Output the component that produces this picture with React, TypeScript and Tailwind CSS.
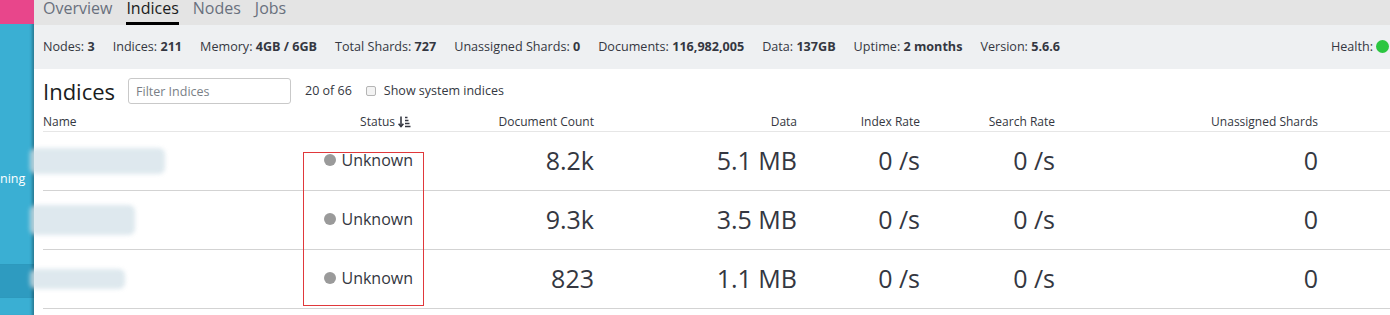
const stats = [
  { label: 'Nodes:', value: '3' },
  { label: 'Indices:', value: '211' },
  { label: 'Memory:', value: '4GB / 6GB' },
  { label: 'Total Shards:', value: '727' },
  { label: 'Unassigned Shards:', value: '0' },
  { label: 'Documents:', value: '116,982,005' },
  { label: 'Data:', value: '137GB' },
  { label: 'Uptime:', value: '2 months' },
  { label: 'Version:', value: '5.6.6' },
]

const rows = [
  { docs: '8.2k', data: '5.1 MB', blob: 'w-[135px] h-[26px]' },
  { docs: '9.3k', data: '3.5 MB', blob: 'w-[105px] h-[30px]' },
  { docs: '823', data: '1.1 MB', blob: 'w-[95px] h-[20px]' },
]

// column widths, all but the name column right-aligned
const cols = 'grid grid-cols-[257px_113px_181px_203px_123px_135px_263px_1fr]'

function SortIcon() {
  return (
    <svg width="13" height="12" viewBox="0 0 13 12" fill="none" stroke="#343741" strokeWidth="1.6">
      <path d="M3 0.5v10" />
      <path d="M0.6 7.8 3 10.6 5.4 7.8" />
      <path d="M7 1.5h2.5M7 4.5h3.5M7 7.5h4.5M7 10.5h5.5" />
    </svg>
  )
}

export default function App() {
  return (
    <div className="relative flex h-[315px] w-[1390px] overflow-hidden bg-white font-['Open_Sans',sans-serif] text-[#343741]">
      {/* Sidebar */}
      <div className="flex w-[34px] shrink-0 flex-col bg-[#3aafd3] shadow-[inset_-4px_0_3px_-2px_rgba(0,0,0,0.3)]">
        <div className="h-[24px] bg-[#e8468b]" />
        <div className="h-[146px]" />
        <div className="overflow-hidden whitespace-nowrap text-[12.5px] leading-[18px] text-white">ning</div>
        <div className="h-[76px]" />
        <div className="h-[34px] bg-[#2e9bc0] shadow-[inset_-4px_0_3px_-2px_rgba(0,0,0,0.3)]" />
      </div>

      <div className="flex min-w-0 flex-1 flex-col">
        {/* Tabs */}
        <div className="flex h-[25px] gap-[14px] bg-[#e4e4e4] pl-[9px] text-[16px] leading-[17px]">
          <div className="h-[25px] text-[#69707d]">Overview</div>
          <div className="h-[25px] border-b-[3px] border-black text-[#1a1c21]">Indices</div>
          <div className="h-[25px] text-[#69707d]">Nodes</div>
          <div className="h-[25px] text-[#69707d]">Jobs</div>
        </div>

        {/* Cluster stats */}
        <div className="flex h-[44px] items-center gap-[18px] bg-[#eef0f2] pl-[9px] pr-[1px] text-[12.6px]">
          {stats.map((s) => (
            <div key={s.label} className="whitespace-nowrap">
              {s.label} <span className="font-bold">{s.value}</span>
            </div>
          ))}
          <div className="ml-auto flex items-center gap-[3px] whitespace-nowrap">
            Health:
            <span className="h-[13px] w-[13px] rounded-full bg-[#2bc640]" />
          </div>
        </div>

        {/* Indices heading + filter */}
        <div className="flex items-center pl-[9px] pt-[9px]">
          <div className="text-[22px] leading-[26px] text-[#1a1c21]">Indices</div>
          <input
            className="ml-[13px] h-[26px] w-[163px] rounded-[3px] border border-[#c9c9c9] bg-white px-[7px] text-[12.5px] outline-none placeholder:text-[#7a7f87]"
            placeholder="Filter Indices"
          />
          <span className="ml-[14px] text-[12.5px]">20 of 66</span>
          <span className="ml-[14px] h-[10px] w-[10px] rounded-[2px] border border-[#b5b5b5] bg-[#f3f3f3]" />
          <span className="ml-[8px] text-[12.5px]">Show system indices</span>
        </div>

        {/* Table */}
        <div className="ml-[9px]">
          <div className={`${cols} h-[28px] items-end border-b border-[#e6e6e6] pb-[1px] text-[12px] leading-[16px]`}>
            <div>Name</div>
            <div className="flex items-center justify-end gap-[3px] pr-[2px]">
              Status
              <SortIcon />
            </div>
            <div className="text-right">Document Count</div>
            <div className="text-right">Data</div>
            <div className="text-right">Index Rate</div>
            <div className="text-right">Search Rate</div>
            <div className="text-right">Unassigned Shards</div>
            <div />
          </div>

          {rows.map((r, i) => (
            <div key={i} className={`${cols} h-[59px] items-center border-b border-[#d3d3d3] text-[25px] leading-[32px]`}>
              <div className="-ml-[13px] flex">
                <div className={`${r.blob} rounded-[6px] bg-[#d6e3ea] opacity-80 blur-[2px]`} />
              </div>
              <div className="-mt-[2px] flex items-center justify-end gap-[5px] text-[16px] leading-[22px]">
                <span className="h-[12px] w-[12px] rounded-full bg-[#9a9a9a]" />
                Unknown
              </div>
              <div className="-mt-[2px] text-right">{r.docs}</div>
              <div className="-mt-[2px] text-right">{r.data}</div>
              <div className="-mt-[2px] text-right">0 /s</div>
              <div className="-mt-[2px] text-right">0 /s</div>
              <div className="-mt-[2px] text-right">0</div>
              <div />
            </div>
          ))}
        </div>
      </div>

      {/* annotation box */}
      <div className="pointer-events-none absolute left-[303px] top-[152px] h-[154px] w-[121px] border border-[#e0383b]" />
    </div>
  )
}
